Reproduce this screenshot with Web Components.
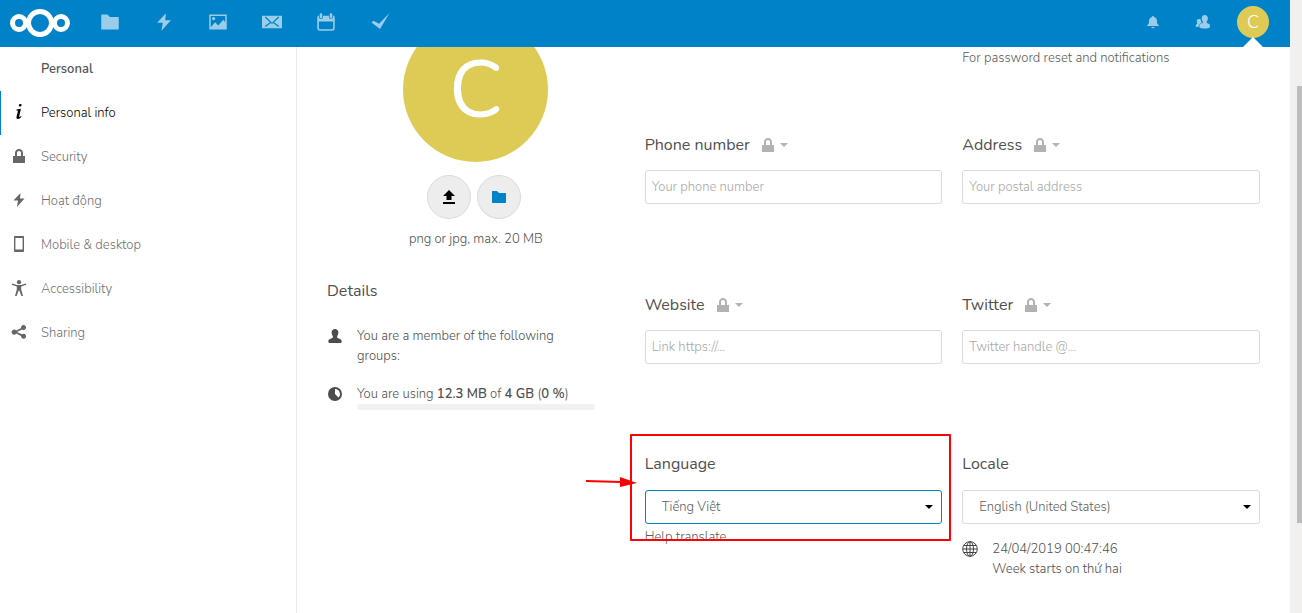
<!DOCTYPE html>
<html lang="en">
<head>
<meta charset="utf-8">
<title>Personal info</title>
<style>
html, body { height: 100%; }
body { margin: 0; background: #fff; color: #5c5c5c; font: 300 13px/20px Nunito, Lato, "Open Sans", "Noto Sans", sans-serif; }
</style>
</head>
<body>
<settings-page></settings-page>
<script>
const glyphs = {
  folder: '<path d="M1.500 2a.5.5 0 0 0-.5.5v11c0 .3.2.5.5.5h13c.3 0 .5-.2.5-.5v-9a.5.5 0 0 0-.5-.5H8L6 2z"/>',
  bolt: '<path d="M9.500 1 2.500 8.500H7L6 15l7.500-8.500H9z"/>',
  picture: '<path fill-rule="evenodd" d="M1 2h14v12H1zm1.200 1.200v9l3.500-4 2.500 2.600 4-4.500 1.600 2V3.200z"/><circle cx="4.500" cy="5.200" r="1.300"/>',
  mail: '<path fill-rule="evenodd" d="M0 3h16v10H0zm2.300 1.300 4 3.900-4 3 .6.7 4.200-3.100.9.800.9-.8 4.200 3.100.6-.7-4-3 4-3.900-.7-.7L8 8.500 3 3.600z"/>',
  calendar: '<path fill-rule="evenodd" d="M4 1c.6 0 1 .4 1 1v2c0 .6-.4 1-1 1s-1-.4-1-1V2c0-.6.4-1 1-1zm8 0c.6 0 1 .4 1 1v2c0 .6-.4 1-1 1s-1-.4-1-1V2c0-.6.400-1 1-1zM2.400 2.600v2C2.700 5.300 3.300 5.600 4 5.600s1.500-.6 1.600-1.400V3h4.800v1.200c.1.800.8 1.400 1.600 1.400s1.600-.6 1.600-1.400V2.800C14.600 3 15 3.800 15 4.600V13c0 1.100-.9 2-2 2H3c-1.100 0-2-.9-2-2V4.600c0-.9.500-1.700 1.400-2zM2.300 7.500V13c0 .4.300.7.7.7h10c.4 0 .7-.3.7-.7V7.500z"/>',
  check: '<path d="M15.600 .8 8 13.500 1.200 8.300 2.600 7 7.300 9.400z"/>',
  bell: '<path d="M8 2c-.6 0-1 .5-1 1-1.900.4-3 2-3 4 0 2.500-.4 3.500-2 4.500v.5h12v-.5c-1.600-1-2-2-2-4.500 0-2-1.100-3.600-3-4 0-.5-.4-1-1-1zM6.200 13c.2.800.9 1.300 1.800 1.300s1.600-.5 1.800-1.300z"/>',
  contacts: '<path d="M9.800 1C8 1 6.700 2.300 6.700 4.200c0 1.400.3 2.400 1.100 3.200.1.700.1 1.400-.2 1.700-1.600.8-3.300 1.200-3.300 2.900 0 1.300.4 2.600 5.400 2.600s5.300-1.300 5.300-2.600c0-1.700-1.500-2.100-3.100-2.900-.3-.3-.3-1-.2-1.700.8-.8 1.200-1.800 1.200-3.200C12.900 2.300 11.500 1 9.800 1zM3.900 5C2.500 5 1.700 6 1.700 7.200c0 .8.200 1.400.6 1.900.1.500 0 .8-.1 1C1.200 10.600.7 11 .7 12c0 .6.400 1 2.800 1.100 0-2.400.5-3 2.900-4.200.2-.3.200-.7.200-1C5.900 7 5.700 6 5.700 5.400 5.400 5.100 4.600 5 3.900 5z"/>',
  info: '<path d="M9.300 0c1 0 1.400.5 1.300 1.200-.1.800-.8 1.400-1.600 1.400s-1.300-.5-1.200-1.300C7.800.6 8.500 0 9.300 0zM5.300 6.400l.2-.9 4.400-.7L8.300 12c-.2.900 0 1.200.4 1.100.5-.1 1-.6 1.400-1l.4.400C9.600 13.900 8.400 15 7.100 15c-1.400 0-1.900-.8-1.600-2l1.300-5.500c.2-.8.100-1.100-.4-1.100z"/>',
  lock: '<path fill-rule="evenodd" d="M8 1C5.700 1 4 2.900 4 5v3H2v7h12V8h-2V5c0-2.100-1.700-4-4-4zm0 2c1.200 0 2 .9 2 2v3H6V5c0-1.100.8-2 2-2z"/>',
  phone: '<path fill-rule="evenodd" d="M4 0h8c.6 0 1 .4 1 1v14c0 .6-.4 1-1 1H4c-.6 0-1-.4-1-1V1c0-.6.400-1 1-1zm.400 2v11.500h7.200V2z"/>',
  person: '<circle cx="8" cy="2.200" r="2.100"/><path d="M1 3.500 6 5h4l5-1.500.3 1.200L10.200 6.500v3L12 16h-1.600L8.300 10.500h-.6L5.600 16H4l1.800-6.500v-3L.7 4.700z"/>',
  share: '<path d="M12.500 1a2.500 2.500 0 0 0-2.400 3.100L5.200 6.600a2.500 2.500 0 1 0 0 3l4.900 2.400a2.500 2.500 0 1 0 .9-1.700L6 8l5-2.500A2.500 2.500 0 1 0 12.500 1z"/>',
  upload: '<path d="M8 1 2 7h3.500v4h5V7H14zM2 13v2h12v-2z"/>',
  user: '<path d="M8 1C6 1 4.600 2.300 4.600 4.300c0 1.400.4 2.800 1.200 3.600.2.900.2 1.400-.1 1.900C4 10.700 1.300 11.200 1.300 13.200c0 1.300 1 1.800 1 1.800h11.400s1-.5 1-1.800c0-2-2.700-2.500-4.400-3.400-.3-.5-.3-1-.1-1.900.8-.8 1.200-2.200 1.200-3.600C11.400 2.300 10 1 8 1z"/>',
  quota: '<path fill-rule="evenodd" d="M8 1a7 7 0 1 0 0 14A7 7 0 0 0 8 1zm0 2a5 5 0 0 1 3.500 8.500L8 8z"/>',
  globe: '<g fill="none" stroke="currentColor"><circle cx="8" cy="8" r="7.300"/><ellipse cx="8" cy="8" rx="3.500" ry="7.300"/><path d="M8 1v14M1 8h14M2 4.500h12M2 11.500h12"/></g>',
  caret: '<path d="M4 6h8l-4 4z"/>'
};

class AppIcon extends HTMLElement {
  connectedCallback() {
    this.attachShadow({ mode: 'open' }).innerHTML = `
      <style>
        :host { display: inline-flex; flex: none; width: var(--size, 16px); height: var(--size, 16px); }
        svg { width: 100%; height: 100%; fill: currentColor; }
      </style>
      <svg viewBox="0 0 16 16" aria-hidden="true">${glyphs[this.getAttribute('name')]}</svg>`;
  }
}
customElements.define('app-icon', AppIcon);

class AppHeader extends HTMLElement {
  connectedCallback() {
    const apps = [['folder', 'Files'], ['bolt', 'Activity'], ['picture', 'Gallery'], ['mail', 'Mail'], ['calendar', 'Calendar'], ['check', 'Tasks']];
    this.attachShadow({ mode: 'open' }).innerHTML = `
      <style>
        :host { display: flex; justify-content: space-between; height: 47px; background: #0082c9; color: #fff; }
        nav, .tools { display: flex; }
        nav { padding-left: 10px; }
        .logo { display: flex; align-items: center; width: 60px; padding: 0 13px 2px 0; }
        .app, button { display: flex; align-items: center; justify-content: center; box-sizing: border-box; height: 47px; padding: 0 0 3px; color: #fff; }
        .app { width: 54px; }
        .app app-icon { --size: 20px; opacity: .6; }
        button { width: 50px; border: 0; background: none; font: inherit; position: relative; }
        button app-icon { opacity: .6; }
        .tools { padding-right: 12px; }
        .avatar { width: 32px; height: 32px; border-radius: 50%; background: #ddcb55; font-size: 18px; line-height: 32px; text-align: center; }
        .me::after { content: ""; position: absolute; bottom: 0; left: 15px; border: 10px solid transparent; border-top: 0; border-bottom-color: #fff; }
      </style>
      <nav aria-label="Apps">
        <a class="logo" href="#home" aria-label="Home">
          <svg width="60" height="28" viewBox="0 0 60 28" fill="none" stroke="#fff" stroke-width="5"><circle cx="30" cy="14" r="11.500"/><circle cx="9" cy="14" r="6.500"/><circle cx="51" cy="14" r="6.500"/></svg>
        </a>
        ${apps.map(([i, t]) => `<a class="app" href="#${i}" aria-label="${t}"><app-icon name="${i}"></app-icon></a>`).join('')}
      </nav>
      <div class="tools">
        <button aria-label="Notifications"><app-icon name="bell"></app-icon></button>
        <button aria-label="Contacts"><app-icon name="contacts"></app-icon></button>
        <button class="me" aria-label="Account"><span class="avatar">C</span></button>
      </div>`;
  }
}
customElements.define('app-header', AppHeader);

class NavItem extends HTMLElement {
  connectedCallback() {
    this.attachShadow({ mode: 'open' }).innerHTML = `
      <style>
        :host { display: block; }
        a { display: flex; align-items: center; gap: 14px; height: 44px; padding-left: 11px; color: #707070; text-decoration: none; }
        app-icon { color: #666; margin-bottom: 2px; }
        :host([active]) a { box-shadow: inset 1px 0 #0082c9; color: #000; }
        :host([active]) app-icon { color: #000; }
      </style>
      <a href="#${this.getAttribute('icon')}"><app-icon name="${this.getAttribute('icon')}"></app-icon><slot></slot></a>`;
  }
}
customElements.define('nav-item', NavItem);

class SettingsNav extends HTMLElement {
  connectedCallback() {
    this.attachShadow({ mode: 'open' }).innerHTML = `
      <style>
        :host { display: block; border-right: 1px solid #ebebeb; }
        h2 { margin: 0; padding-left: 41px; font-size: 13px; line-height: 44px; font-weight: 600; color: #555; }
      </style>
      <nav aria-label="Settings">
        <h2>Personal</h2>
        <nav-item icon="info" active>Personal info</nav-item>
        <nav-item icon="lock">Security</nav-item>
        <nav-item icon="bolt">Hoạt động</nav-item>
        <nav-item icon="phone">Mobile &amp; desktop</nav-item>
        <nav-item icon="person">Accessibility</nav-item>
        <nav-item icon="share">Sharing</nav-item>
      </nav>`;
  }
}
customElements.define('settings-nav', SettingsNav);

class ProfileCard extends HTMLElement {
  connectedCallback() {
    this.attachShadow({ mode: 'open' }).innerHTML = `
      <style>
        :host { display: block; color: #505050; }
        .picture { display: flex; flex-direction: column; align-items: center; margin-top: -30px; }
        .avatar { display: flex; align-items: center; justify-content: center; box-sizing: border-box; width: 145px; height: 145px; padding-top: 3px; border-radius: 50%; background: #ddcb55; color: #fff; font-size: 80px; line-height: 80px; font-weight: 400; }
        .actions { display: flex; gap: 6px; padding: 13px 3px 10px 0; }
        button { display: flex; align-items: center; justify-content: center; width: 44px; height: 44px; padding: 0; border: 1px solid #dbdbdb; border-radius: 50%; background: #ededed; color: #000; }
        .files { color: #0082c9; }
        h3 { margin: 30px 0 23px; font-size: 16px; line-height: 24px; font-weight: 400; color: #505050; }
        ul { margin: 0; padding: 0; width: 90%; list-style: none; }
        li { display: flex; gap: 14px; margin-bottom: 18px; }
        li > app-icon { color: #4c4c4c; margin-top: 2px; }
        li > div { flex: 1; }
        b { font-weight: 600; }
        progress { display: block; width: 100%; height: 6px; border: 0; border-radius: 3px; appearance: none; background: #f1f1f1; overflow: hidden; }
        progress::-webkit-progress-bar { background: #f1f1f1; }
      </style>
      <div class="picture">
        <div class="avatar">C</div>
        <div class="actions">
          <button aria-label="Upload new"><app-icon name="upload"></app-icon></button>
          <button class="files" aria-label="Select from Files"><app-icon name="folder"></app-icon></button>
        </div>
        <span>png or jpg, max. 20 MB</span>
      </div>
      <h3>Details</h3>
      <ul>
        <li><app-icon name="user"></app-icon><div>You are a member of the following groups:</div></li>
        <li><app-icon name="quota"></app-icon><div><span id="quota">You are using <b>12.3 MB</b> of <b>4 GB</b> (<b>0 %</b>)</span><progress aria-labelledby="quota" value="0" max="100"></progress></div></li>
      </ul>`;
  }
}
customElements.define('profile-card', ProfileCard);

class FormField extends HTMLElement {
  connectedCallback() {
    const g = n => this.getAttribute(n);
    const control = this.hasAttribute('value')
      ? `<select id="control"><option>${g('value')}</option></select><app-icon class="drop" name="caret"></app-icon>`
      : `<input id="control" type="text" placeholder="${g('placeholder')}">`;
    this.attachShadow({ mode: 'open' }).innerHTML = `
      <style>
        :host { display: block; color: #505050; }
        .head { display: flex; align-items: center; gap: 10px; height: 24px; margin-bottom: 13px; }
        :host([value]) .head { margin-bottom: 14px; }
        label { font-size: 16px; line-height: 24px; font-weight: 400; color: #505050; }
        button { display: flex; align-items: center; padding: 0; border: 0; background: none; color: #b2b2b2; }
        .box { display: grid; align-items: center; }
        .box > * { grid-area: 1 / 1; }
        input, select { box-sizing: border-box; width: 100%; height: 34px; margin: 0; padding: 0 6px; border: 1px solid #dbdbdb; border-radius: 3px; background: #fff; color: #606060; font: inherit; outline: 0; appearance: none; }
        select { padding: 0 16px; }
        :host([focused]) select { border-color: #0082c9; }
        input::placeholder { color: #a8a8a8; }
        .drop { justify-self: end; margin-right: 5px; color: #000; pointer-events: none; }
      </style>
      <div class="head"><label for="control">${g('label')}</label>
        ${this.hasAttribute('scope') ? '<button aria-label="Change privacy level"><app-icon name="lock"></app-icon><app-icon name="caret"></app-icon></button>' : ''}
      </div>
      <div class="box">${control}</div>
      <slot></slot>`;
  }
}
customElements.define('form-field', FormField);

class ProfileFields extends HTMLElement {
  connectedCallback() {
    this.attachShadow({ mode: 'open' }).innerHTML = `
      <style>
        :host { display: grid; grid-template-columns: 1fr 1fr; grid-template-rows: 86px 160px 159px; grid-auto-rows: 160px; column-gap: 20px; }
        .hint { grid-column: 2; padding-top: 1px; }
        .help { display: block; margin-top: 3px; color: #5c5c5c; text-decoration: none; }
        .locale { display: flex; gap: 14px; margin-top: 15px; }
        .locale app-icon { margin-top: 2px; color: #444; }
        .marked { position: relative; }
        .callout { position: absolute; left: -60px; right: -9px; top: -18px; height: 107px; display: flex; pointer-events: none; }
        .callout svg { flex: none; width: 52px; height: 12px; margin: 42px -7px 0 0; }
        .callout i { flex: 1; border: 2px solid #f00; border-radius: 1px; box-sizing: border-box; }
      </style>
      <div class="hint">For password reset and notifications</div>
      <form-field label="Phone number" placeholder="Your phone number" scope></form-field>
      <form-field label="Address" placeholder="Your postal address" scope></form-field>
      <form-field label="Website" placeholder="Link https://…" scope></form-field>
      <form-field label="Twitter" placeholder="Twitter handle @…" scope></form-field>
      <div class="marked">
        <form-field label="Language" value="Tiếng Việt" focused><a class="help" href="#translate">Help translate</a></form-field>
        <div class="callout"><svg viewBox="0 0 52 12"><path d="M1 5 36 6" stroke="#f00" stroke-width="2"/><path d="M35 1 52 7 35 11z" fill="#f00"/></svg><i></i></div>
      </div>
      <form-field label="Locale" value="English (United States)">
        <div class="locale"><app-icon name="globe"></app-icon><div>24/04/2019 00:47:46<br>Week starts on thứ hai</div></div>
      </form-field>`;
  }
}
customElements.define('profile-fields', ProfileFields);

class PageScrollbar extends HTMLElement {
  connectedCallback() {
    this.attachShadow({ mode: 'open' }).innerHTML = `
      <style>
        :host { display: grid; grid-template-rows: 86fr 437fr 90fr; background: #f1f0ef; }
        i { grid-row: 2; justify-self: end; width: 5px; background: #bdbdbd; }
      </style><i></i>`;
  }
}
customElements.define('page-scrollbar', PageScrollbar);

class SettingsPage extends HTMLElement {
  connectedCallback() {
    this.attachShadow({ mode: 'open' }).innerHTML = `
      <style>
        :host { display: grid; grid-template: auto minmax(0, 1fr) / 297px minmax(0, 1fr) 12px; height: 100vh; overflow: hidden; }
        app-header { grid-column: 1 / 3; }
        page-scrollbar { grid-area: 1 / 3 / 3 / 4; }
        main { display: grid; grid-template-columns: calc((100% - 40px) / 3) 1fr; column-gap: 20px; padding: 0 30px; overflow: hidden; }
      </style>
      <app-header></app-header>
      <page-scrollbar></page-scrollbar>
      <settings-nav></settings-nav>
      <main><profile-card></profile-card><profile-fields></profile-fields></main>`;
  }
}
customElements.define('settings-page', SettingsPage);
</script>
</body>
</html>
